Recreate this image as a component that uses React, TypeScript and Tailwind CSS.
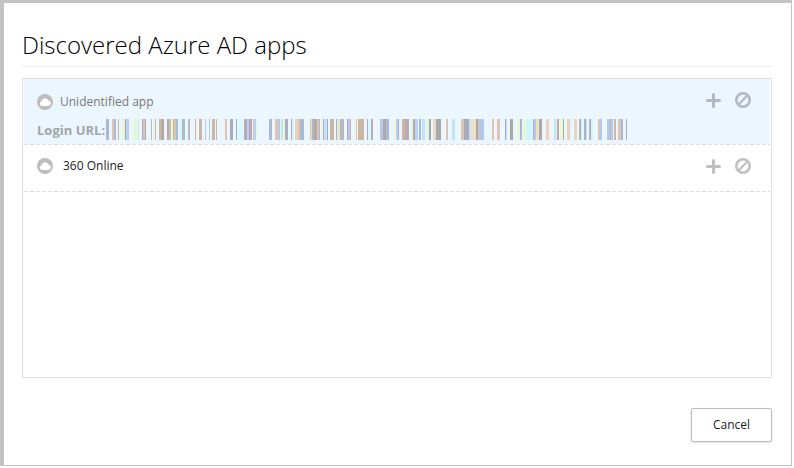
import React from "react";

type Stripe = [x: number, width: number, color: string];

const blue = "#a9b9d9";
const sky = "#b3c8ea";
const ice = "#c1e2ff";
const aqua = "#cdf7ff";
const lime = "#e8f8d3";
const tan = "#cab6a3";
const peach = "#dec5b2";
const rose = "#ecd1bf";
const mauve = "#b8a9b3";
const gray = "#a9a9a9";
const violet = "#a9a9c9";
const sand = "#efe0c6";

const stripes: Stripe[] = [
  [0, 3, blue], [6, 2, peach], [8, 2, blue], [12, 1, tan], [16, 3, lime], [19, 1, gray], [20, 3, "#b8d0ff"],
  [27, 2, lime], [29, 1, aqua], [30, 2, lime], [32, 1, ice], [36, 1, violet], [37, 2, peach], [39, 1, gray],
  [45, 1, blue], [47, 2, "#e8f4ea"], [49, 1, tan], [53, 3, tan], [56, 2, gray], [61, 2, mauve], [63, 2, "#c6c2ac"],
  [65, 2, lime], [67, 1, tan], [68, 2, peach], [70, 2, blue], [74, 2, aqua], [76, 1, tan], [77, 2, blue],
  [82, 1, tan], [83, 1, blue], [89, 1, tan], [93, 3, tan], [99, 1, sky], [103, 1, sky], [106, 3, tan], [110, 1, tan],
  [119, 2, peach], [124, 3, violet], [130, 1, violet], [131, 6, "#d9f7ff"], [138, 3, mauve], [141, 2, "#b8d0ff"],
  [143, 3, mauve], [147, 1, peach], [148, 2, "#b8d0ff"], [150, 3, "#e6f8f0"], [163, 3, blue], [169, 3, peach],
  [172, 2, sky], [174, 1, lime], [175, 2, ice], [177, 2, lime], [179, 3, "#b1a9c3"], [185, 1, violet], [186, 2, aqua],
  [189, 3, rose], [192, 2, "#dec5aa"], [194, 4, blue], [204, 1, peach], [205, 1, "#e8dfb5"], [206, 2, "#a9b8c2"],
  [208, 3, "#b8a9a9"], [211, 2, peach], [213, 1, blue], [215, 1, lime], [217, 1, mauve], [218, 3, ice], [221, 1, violet],
  [224, 4, tan], [230, 1, mauve], [231, 1, aqua], [232, 2, "#e8e6bc"], [234, 1, tan], [235, 2, blue], [237, 1, tan],
  [241, 1, mauve], [242, 2, sky], [244, 1, tan], [248, 1, lime], [250, 1, peach], [252, 6, tan], [261, 1, violet],
  [262, 3, "#d9f7ff"], [265, 2, "#c2a9a9"], [274, 3, sky], [277, 3, "#b1a9a9"], [280, 3, blue], [288, 2, "#f0f5d3"],
  [290, 2, "#b3d0ff"], [292, 1, violet], [296, 3, tan], [299, 4, mauve], [305, 1, aqua], [306, 1, lime], [307, 2, "#b8a99b"],
  [309, 3, "#b8d0ff"], [313, 2, blue], [316, 3, ice], [320, 2, lime], [322, 1, aqua], [323, 2, gray], [327, 3, "#e8dcc8"],
  [330, 5, gray], [340, 2, peach], [346, 3, ice], [351, 1, "#e6f8f0"], [355, 3, peach], [358, 5, "#a9a9b8"], [363, 2, ice],
  [365, 3, sand], [368, 2, sand], [370, 2, gray], [372, 1, peach], [373, 5, sky], [386, 2, peach], [391, 3, peach],
  [399, 1, violet], [400, 1, ice], [403, 1, "#e6f8f0"], [404, 3, gray], [411, 3, lime], [414, 2, blue], [417, 3, lime],
  [420, 6, aqua], [427, 1, mauve], [428, 2, "#b0c8ff"], [430, 3, sand], [433, 3, gray], [440, 3, rose], [448, 2, ice],
  [450, 1, lime], [451, 2, mauve], [454, 3, lime], [457, 1, gray], [461, 3, rose], [464, 1, aqua], [468, 3, rose],
  [473, 1, tan], [474, 1, violet], [475, 2, aqua], [478, 2, "#a9b1c8"], [480, 1, ice], [483, 1, tan], [484, 1, violet],
  [485, 2, aqua], [492, 2, peach], [494, 2, sky], [501, 3, sky], [504, 1, tan], [505, 2, sky], [508, 2, tan],
  [512, 3, peach], [515, 2, blue], [520, 1, violet],
];

function CloudIcon() {
  return (
    <svg className="size-4 shrink-0" viewBox="0 0 16 16" aria-hidden="true">
      <circle cx="8" cy="8" r="8" fill="#bdbdbd" />
      <path
        d="M4.900 12a2.300 2.300 0 0 1-.7-4.400 3.700 3.700 0 0 1 7-1.200 2.900 2.900 0 0 1 1.600 5.100c-.4.300-.8.500-1.300.500z"
        fill="#fff"
      />
    </svg>
  );
}

function PlusIcon() {
  return (
    <svg className="size-4" viewBox="0 0 16 16" aria-hidden="true">
      <path d="M8.500 2.500v12M2.500 8.500h12" stroke="currentColor" strokeWidth="3" strokeLinecap="round" />
    </svg>
  );
}

function BlockIcon() {
  return (
    <svg className="size-4" viewBox="0 0 16 16" fill="none" stroke="currentColor" aria-hidden="true">
      <circle cx="8" cy="8" r="6.700" strokeWidth="2.600" />
      <path d="M3.800 12.200l8.400-8.400" strokeWidth="2.200" />
    </svg>
  );
}

function Actions({ name, tone }: { name: string; tone: string }) {
  return (
    <div className={`flex gap-3.5 ${tone}`}>
      <button type="button" aria-label={`Add ${name}`}>
        <PlusIcon />
      </button>
      <button type="button" aria-label={`Block ${name}`}>
        <BlockIcon />
      </button>
    </div>
  );
}

function DashedRule() {
  return (
    <svg className="block h-px w-full" aria-hidden="true">
      <line x1="0" y1="0.5" x2="100%" y2="0.5" stroke="#dcdfe1" strokeDasharray="4 2" />
    </svg>
  );
}

export default function App() {
  return (
    <div className="min-h-screen bg-white pr-0.5 pb-0.5 font-['Segoe_UI','Open_Sans',sans-serif]">
      <main className="flex min-h-[calc(100vh-2px)] flex-col border-t-3 border-r border-b border-l-4 border-[#c3c3c3] bg-white pr-[19px] pl-[18px]">
        <h1 className="mt-6 border-b border-[#ececec] pb-1 text-2xl leading-[35px] font-light text-black">
          Discovered Azure AD apps
        </h1>

        <ul className="mt-[11px] h-[300px] border border-[#e0e0e0] px-px text-xs leading-5">
          <li>
            <div className="bg-[#ebf6ff] pt-[13px] pr-[19px] pb-1 pl-[13px]">
              <div className="flex items-start justify-between">
                <div className="flex items-center gap-[7px] text-[#777]">
                  <CloudIcon />
                  <span>Unidentified app</span>
                </div>
                <Actions name="Unidentified app" tone="text-[#b3b8be]" />
              </div>
              <div className="mt-[7px] flex items-center text-[#a3a6a8]">
                <span className="w-[69px] text-[13px] leading-5 font-bold whitespace-nowrap">Login URL:</span>
                <svg
                  className="h-[21px] w-[521px]"
                  viewBox="0 0 521 21"
                  shapeRendering="crispEdges"
                  role="img"
                  aria-label="Hidden address"
                >
                  {stripes.map(([x, width, color]) => (
                    <rect key={x} x={x} y="0" width={width} height="21" fill={color} />
                  ))}
                </svg>
              </div>
            </div>
            <DashedRule />
          </li>
          <li>
            <div className="flex items-center justify-between pt-[11px] pr-[19px] pb-[15px] pl-[13px]">
              <div className="flex items-center gap-2.5 text-[#222]">
                <CloudIcon />
                <span>360 Online</span>
              </div>
              <Actions name="360 Online" tone="text-[#c0c0c0]" />
            </div>
            <DashedRule />
          </li>
        </ul>

        <div className="mt-[30px] mb-[23px] flex justify-end">
          <button
            type="button"
            className="h-[34px] w-[81px] rounded-xs border border-[#bcbcbc] bg-white text-xs text-[#1b1b1b] shadow-sm"
          >
            Cancel
          </button>
        </div>
      </main>
    </div>
  );
}
